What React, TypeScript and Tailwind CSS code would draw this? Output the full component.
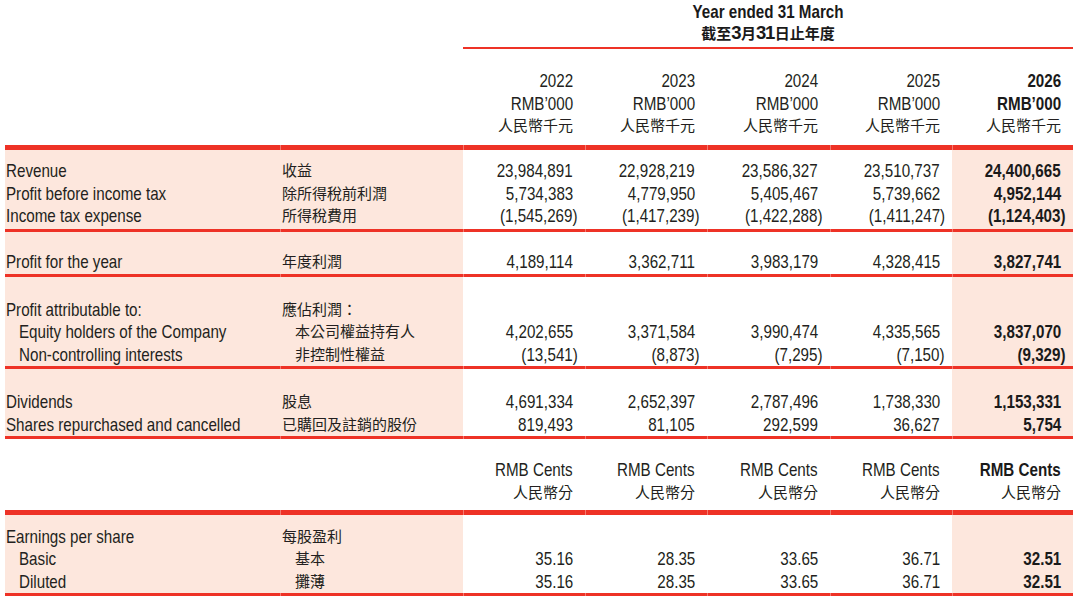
import React from "react";

const EN = "font-['Liberation_Sans_Narrow','Arial_Narrow','Liberation_Sans',sans-serif]";
const ZH = "font-['Noto_Sans_CJK_TC','Noto_Sans_CJK_SC',sans-serif]";
const COLS = "grid grid-cols-[275px_183px_122px_122px_123px_122px_121px]";
const PINK = "bg-[#fde7dd]";
const RED = "bg-[#ee3226]";

type Row = { en: string; zh: string; v?: string[]; indent?: boolean };

function N({ children, right }: { children: React.ReactNode; right?: boolean }) {
  return (
    <span className={`inline-block whitespace-nowrap scale-x-[0.82] ${right ? "origin-right" : "origin-left"}`}>
      {children}
    </span>
  );
}

function Num({ v, bold }: { v: string; bold?: boolean }) {
  const neg = v.startsWith("(") && v.endsWith(")");
  return (
    <div className={`h-[22.5px] leading-[22.5px] text-right text-[18.5px] ${EN} ${bold ? "font-bold text-[#1a1a1a]" : ""}`}>
      <N right>
        {neg ? (
          <>
            {v.slice(0, -1)}
            <span className="mr-[-6px]">)</span>
          </>
        ) : (
          v
        )}
      </N>
    </div>
  );
}

function Rule({ h }: { h: string }) {
  const cells = [0, 1, 2, 3, 4, 5, 6];
  return (
    <div className={`${COLS} ${h}`}>
      {cells.map((i) => (
        <div key={i} className={`${RED} ${i > 0 ? "border-l border-[#f37a70]" : ""}`} />
      ))}
    </div>
  );
}

function Section({ rows, pt, h }: { rows: Row[]; pt: string; h: string }) {
  return (
    <div className={`${COLS} ${h} overflow-hidden`}>
      <div className={`${PINK} ${pt} pl-[1px]`}>
        {rows.map((r, i) => (
          <div key={i} className={`h-[22.5px] leading-[22.5px] text-[18.5px] whitespace-nowrap ${EN} ${r.indent ? "pl-[13px]" : ""}`}>
            <N>{r.en}</N>
          </div>
        ))}
      </div>
      <div className={`${PINK} ${pt} pl-[2px]`}>
        {rows.map((r, i) => (
          <div key={i} className={`h-[22.5px] leading-[20.5px] text-[15px] whitespace-nowrap ${ZH} ${r.indent ? "pl-[13px]" : ""}`}>
            {r.zh}
          </div>
        ))}
      </div>
      {[0, 1, 2, 3, 4].map((c) => (
        <div key={c} className={`${pt} pr-[12px] ${c === 4 ? PINK : ""}`}>
          {rows.map((r, i) =>
            r.v ? <Num key={i} v={r.v[c]} bold={c === 4} /> : <div key={i} className="h-[22.5px]" />
          )}
        </div>
      ))}
    </div>
  );
}

const years = ["2022", "2023", "2024", "2025", "2026"];

export default function App() {
  return (
    <div className="w-[1080px] h-[613px] bg-white text-[#231f20] overflow-hidden">
      <div className="ml-[5px] w-[1068px]">
        {/* Title */}
        <div className="grid grid-cols-[458px_610px] h-[47px]">
          <div />
          <div className="text-center pt-[1px]">
            <div className={`${EN} font-bold text-[18.5px] leading-[22px] text-[#1a1a1a]`}>
              <span className="inline-block whitespace-nowrap scale-x-[0.82] origin-center">Year ended 31 March</span>
            </div>
            <div className={`${ZH} font-bold text-[15px] leading-[20px] text-[#1a1a1a]`}>
              截至<span className={`${EN} font-bold text-[18.5px] tracking-[-1.5px] pr-[1px]`}>3</span>月<span className={`${EN} font-bold text-[18.5px] tracking-[-1.5px] pr-[1px]`}>31</span>日止年度
            </div>
          </div>
        </div>
        <div className={`ml-[458px] h-[2px] ${RED}`} />
        {/* Year header */}
        <div className={`${COLS} h-[96px]`}>
          <div />
          <div />
          {years.map((y, c) => (
            <div key={y} className="pt-[21px] pr-[12px] text-right">
              <div className={`h-[22.5px] leading-[22.5px] text-[18.5px] ${EN} ${c === 4 ? "font-bold text-[#1a1a1a]" : ""}`}>
                <N right>{y}</N>
              </div>
              <div className={`h-[22.5px] leading-[22.5px] text-[18.5px] ${EN} ${c === 4 ? "font-bold text-[#1a1a1a]" : ""}`}>
                <N right>RMB’000</N>
              </div>
              <div className={`h-[22.5px] leading-[20.5px] text-[15px] ${ZH}`}>人民幣千元</div>
            </div>
          ))}
        </div>
        <Rule h="h-[5px]" />
        <Section
          pt="pt-[10px]"
          h="h-[79px]"
          rows={[
            { en: "Revenue", zh: "收益", v: ["23,984,891", "22,928,219", "23,586,327", "23,510,737", "24,400,665"] },
            { en: "Profit before income tax", zh: "除所得稅前利潤", v: ["5,734,383", "4,779,950", "5,405,467", "5,739,662", "4,952,144"] },
            { en: "Income tax expense", zh: "所得稅費用", v: ["(1,545,269)", "(1,417,239)", "(1,422,288)", "(1,411,247)", "(1,124,403)"] },
          ]}
        />
        <Rule h="h-[3px]" />
        <Section
          pt="pt-[19px]"
          h="h-[42px]"
          rows={[{ en: "Profit for the year", zh: "年度利潤", v: ["4,189,114", "3,362,711", "3,983,179", "4,328,415", "3,827,741"] }]}
        />
        <Rule h="h-[3px]" />
        <Section
          pt="pt-[21.5px]"
          h="h-[89px]"
          rows={[
            { en: "Profit attributable to:", zh: "應佔利潤：" },
            { en: "Equity holders of the Company", zh: "本公司權益持有人", indent: true, v: ["4,202,655", "3,371,584", "3,990,474", "4,335,565", "3,837,070"] },
            { en: "Non-controlling interests", zh: "非控制性權益", indent: true, v: ["(13,541)", "(8,873)", "(7,295)", "(7,150)", "(9,329)"] },
          ]}
        />
        <Rule h="h-[3px]" />
        <Section
          pt="pt-[22px]"
          h="h-[67px]"
          rows={[
            { en: "Dividends", zh: "股息", v: ["4,691,334", "2,652,397", "2,787,496", "1,738,330", "1,153,331"] },
            { en: "Shares repurchased and cancelled", zh: "已購回及註銷的股份", v: ["819,493", "81,105", "292,599", "36,627", "5,754"] },
          ]}
        />
        <Rule h="h-[3px]" />
        {/* Cents header */}
        <div className={`${COLS} h-[71px]`}>
          <div />
          <div />
          {years.map((y, c) => (
            <div key={y} className="pt-[19px] pr-[12px] text-right">
              <div className={`h-[23px] leading-[23px] text-[18.5px] ${EN} ${c === 4 ? "font-bold text-[#1a1a1a]" : ""}`}>
                <N right>RMB Cents</N>
              </div>
              <div className={`h-[23px] leading-[21px] text-[15px] ${ZH}`}>人民幣分</div>
            </div>
          ))}
        </div>
        <Rule h="h-[5px]" />
        <Section
          pt="pt-[10.5px]"
          h="h-[78px]"
          rows={[
            { en: "Earnings per share", zh: "每股盈利" },
            { en: "Basic", zh: "基本", indent: true, v: ["35.16", "28.35", "33.65", "36.71", "32.51"] },
            { en: "Diluted", zh: "攤薄", indent: true, v: ["35.16", "28.35", "33.65", "36.71", "32.51"] },
          ]}
        />
        <Rule h="h-[3px]" />
      </div>
    </div>
  );
}
